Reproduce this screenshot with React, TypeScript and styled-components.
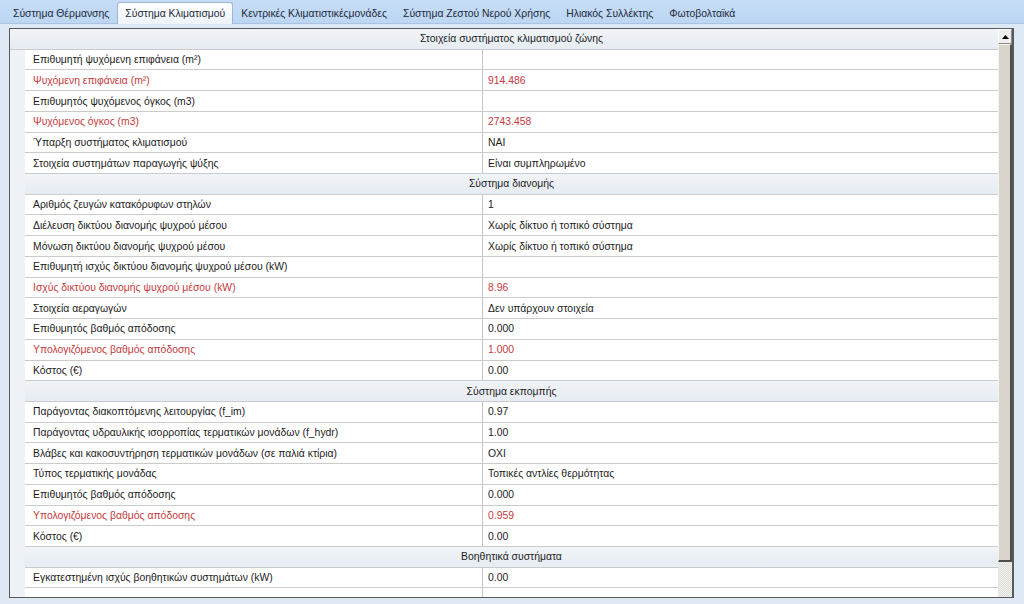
import styled, { createGlobalStyle } from "styled-components";

const GlobalStyle = createGlobalStyle`
    body {
        margin: 0;
        font-family: "Liberation Sans", Arial, sans-serif;
        background: #c3dbf5;
    }
`

const Page = styled.div`
    width: 1024px;
    height: 604px;
    display: flex;
    flex-direction: column;
    overflow: hidden;
`

const TabBar = styled.div`
    height: 24px;
    flex-shrink: 0;
    display: flex;
    align-items: flex-end;
    padding-left: 5px;
    background: linear-gradient(#c6ddf7, #bcd6f3);
    border-bottom: 1px solid #a9c3e0;
    box-sizing: border-box;
`

const Tab = styled.div<{ active?: boolean }>`
    height: ${p => (p.active ? "22px" : "20px")};
    padding: 0 7px;
    margin-bottom: ${p => (p.active ? "-1px" : "0")};
    display: flex;
    align-items: center;
    font-size: 10.4px;
    color: #1e2a3a;
    white-space: nowrap;
    box-sizing: border-box;
    border: 1px solid ${p => (p.active ? "#9db6d3" : "transparent")};
    border-bottom: none;
    border-radius: 3px 3px 0 0;
    background: ${p => (p.active ? "linear-gradient(#fdfeff, #eef3fa)" : "transparent")};
`

const Panel = styled.div`
    flex: 1;
    display: flex;
    padding: 4px 10px 6px 9px;
    background: #dfe9f6;
    min-height: 0;
`

const Frame = styled.div`
    flex: 1;
    display: flex;
    border: 1px solid #5a5a5a;
    border-right-width: 2px;
    background: #eef1f5;
    min-height: 0;
`

const Grid = styled.div`
    flex: 1;
    overflow: hidden;
    display: flex;
    flex-direction: column;
`

const Row = styled.div`
    height: 20.73px;
    flex-shrink: 0;
    display: grid;
    grid-template-columns: 457px 1fr;
    margin-left: 15px;
    box-sizing: border-box;
    border-bottom: 1px solid #cbcbcb;
    background: #ffffff;
    font-size: 10.4px;
`

const Cell = styled.div<{ red?: boolean }>`
    display: flex;
    align-items: center;
    padding-left: 8px;
    color: ${p => (p.red ? "#c43a3c" : "#1c1c1c")};
    white-space: nowrap;
    overflow: hidden;
    & + & {
        border-left: 1px solid #c4c4c4;
        padding-left: 5px;
    }
`

const Section = styled.div<{ first?: boolean }>`
    height: 20.73px;
    flex-shrink: 0;
    display: flex;
    align-items: center;
    justify-content: center;
    margin-left: ${p => (p.first ? "0" : "15px")};
    padding-left: ${p => (p.first ? "15px" : "0")};
    box-sizing: border-box;
    border-bottom: 1px solid #cbcbcb;
    background: linear-gradient(#f1f4f8, #e6ecf3);
    font-size: 10.4px;
    color: #1c1c1c;
`

const Scrollbar = styled.div`
    width: 14px;
    flex-shrink: 0;
    display: flex;
    flex-direction: column;
    background: repeating-conic-gradient(#f2f2f0 0 25%, #dcdcd8 0 50%) 0 0 / 2px 2px;
`

const ScrollButton = styled.div`
    height: 15px;
    flex-shrink: 0;
    display: flex;
    align-items: center;
    justify-content: center;
    box-sizing: border-box;
    background: #eeeeec;
    border: 1px solid #fff;
    border-right-color: #8a8a8a;
    border-bottom-color: #8a8a8a;
`

const Thumb = styled.div`
    height: 518px;
    flex-shrink: 0;
    box-sizing: border-box;
    background: #d9d5cd;
    border: 1px solid #f4f2ee;
    border-right: 2px solid #4e4e4e;
    border-bottom: 2px solid #4e4e4e;
`

type Item = { label: string; value?: string; red?: boolean }
type Block = { title: string; items: Item[] }

const blocks: Block[] = [
    {
        title: "Στοιχεία συστήματος κλιματισμού ζώνης",
        items: [
            { label: "Επιθυμητή ψυχόμενη επιφάνεια (m²)" },
            { label: "Ψυχόμενη επιφάνεια (m²)", value: "914.486", red: true },
            { label: "Επιθυμητός ψυχόμενος όγκος (m3)" },
            { label: "Ψυχόμενος όγκος (m3)", value: "2743.458", red: true },
            { label: "Ύπαρξη συστήματος κλιματισμού", value: "ΝΑΙ" },
            { label: "Στοιχεία συστημάτων παραγωγής ψύξης", value: "Είναι συμπληρωμένο" },
        ],
    },
    {
        title: "Σύστημα διανομής",
        items: [
            { label: "Αριθμός ζευγών κατακόρυφων στηλών", value: "1" },
            { label: "Διέλευση δικτύου διανομής ψυχρού μέσου", value: "Χωρίς δίκτυο ή τοπικό σύστημα" },
            { label: "Μόνωση δικτύου διανομής ψυχρού μέσου", value: "Χωρίς δίκτυο ή τοπικό σύστημα" },
            { label: "Επιθυμητή ισχύς δικτύου διανομής ψυχρού μέσου (kW)" },
            { label: "Ισχύς δικτύου διανομής ψυχρού μέσου (kW)", value: "8.96", red: true },
            { label: "Στοιχεία αεραγωγών", value: "Δεν υπάρχουν στοιχεία" },
            { label: "Επιθυμητός βαθμός απόδοσης", value: "0.000" },
            { label: "Υπολογιζόμενος βαθμός απόδοσης", value: "1.000", red: true },
            { label: "Κόστος (€)", value: "0.00" },
        ],
    },
    {
        title: "Σύστημα εκπομπής",
        items: [
            { label: "Παράγοντας διακοπτόμενης λειτουργίας (f_im)", value: "0.97" },
            { label: "Παράγοντας υδραυλικής ισορροπίας τερματικών μονάδων (f_hydr)", value: "1.00" },
            { label: "Βλάβες και κακοσυντήρηση τερματικών μονάδων (σε παλιά κτίρια)", value: "ΟΧΙ" },
            { label: "Τύπος τερματικής μονάδας", value: "Τοπικές αντλίες θερμότητας" },
            { label: "Επιθυμητός βαθμός απόδοσης", value: "0.000" },
            { label: "Υπολογιζόμενος βαθμός απόδοσης", value: "0.959", red: true },
            { label: "Κόστος (€)", value: "0.00" },
        ],
    },
    {
        title: "Βοηθητικά συστήματα",
        items: [
            { label: "Εγκατεστημένη ισχύς βοηθητικών συστημάτων (kW)", value: "0.00" },
            { label: "" },
        ],
    },
]

const tabs = [
    "Σύστημα Θέρμανσης",
    "Σύστημα Κλιματισμού",
    "Κεντρικές Κλιματιστικέςμονάδες",
    "Σύστημα Ζεστού Νερού Χρήσης",
    "Ηλιακός Συλλέκτης",
    "Φωτοβολταϊκά",
]

function App() {
    return (
        <Page>
            <GlobalStyle />
            <TabBar>
                {tabs.map((t, i) => (
                    <Tab key={t} active={i === 1}>{t}</Tab>
                ))}
            </TabBar>
            <Panel>
                <Frame>
                    <Grid>
                        {blocks.map((b, bi) => (
                            <div key={b.title} style={{ display: "contents" }}>
                                <Section first={bi === 0}>{b.title}</Section>
                                {b.items.map((it, ii) => (
                                    <Row key={ii}>
                                        <Cell red={it.red}>{it.label}</Cell>
                                        <Cell red={it.red}>{it.value}</Cell>
                                    </Row>
                                ))}
                            </div>
                        ))}
                    </Grid>
                    <Scrollbar>
                        <ScrollButton>
                            <svg width="7" height="4" viewBox="0 0 7 4">
                                <path d="M0 4 L3.5 0 L7 4 Z" fill="#000" />
                            </svg>
                        </ScrollButton>
                        <Thumb />
                    </Scrollbar>
                </Frame>
            </Panel>
        </Page>
    )
}

export default App;
